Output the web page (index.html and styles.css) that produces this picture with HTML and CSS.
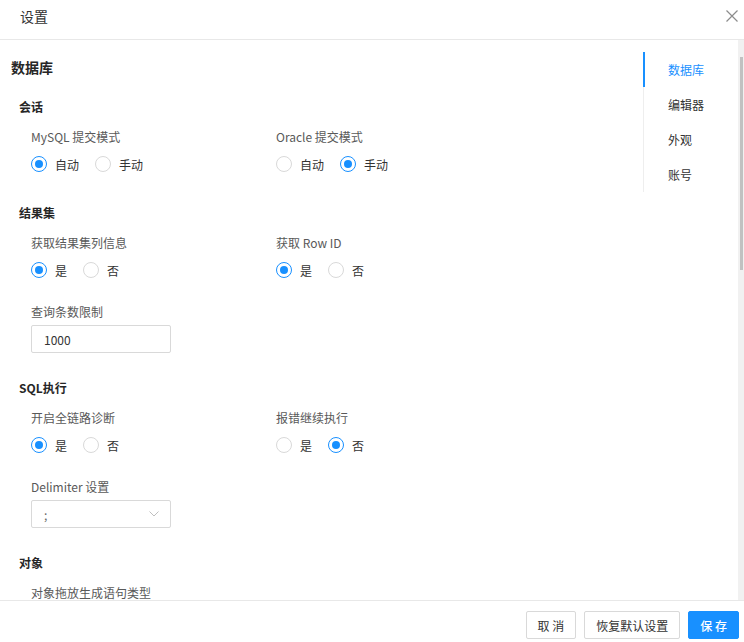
FILE: index.html
```html
<!DOCTYPE html>
<html lang="zh-CN">
<head>
  <meta charset="UTF-8">
  <meta name="viewport" content="width=device-width, initial-scale=1.0">
  <title>设置</title>
  <link rel="stylesheet" href="styles.css">
</head>
<body>
  <div class="modal">
    <!-- 标题栏 -->
    <div class="modal-header">
      <span class="modal-title">设置</span>
      <button type="button" class="modal-close" aria-label="关闭">
        <svg width="12" height="12" viewBox="0 0 12 12"><path d="M0.5 0.5L11.5 11.5M11.5 0.5L0.5 11.5" stroke="#8c8c8c" stroke-width="1.2" fill="none"/></svg>
      </button>
    </div>

    <div class="modal-body">
      <div class="settings">
        <section class="section">
          <h2 class="section-title">数据库</h2>

          <div class="group">
            <h3 class="group-title">会话</h3>
            <div class="fields">
              <div class="field">
                <div class="field-label">MySQL 提交模式</div>
                <div class="radio-group">
                  <label class="radio"><input type="radio" name="mysql-commit" checked><span>自动</span></label>
                  <label class="radio"><input type="radio" name="mysql-commit"><span>手动</span></label>
                </div>
              </div>
              <div class="field">
                <div class="field-label">Oracle 提交模式</div>
                <div class="radio-group">
                  <label class="radio"><input type="radio" name="oracle-commit"><span>自动</span></label>
                  <label class="radio"><input type="radio" name="oracle-commit" checked><span>手动</span></label>
                </div>
              </div>
            </div>
          </div>

          <div class="group">
            <h3 class="group-title">结果集</h3>
            <div class="fields">
              <div class="field">
                <div class="field-label">获取结果集列信息</div>
                <div class="radio-group">
                  <label class="radio"><input type="radio" name="col-info" checked><span>是</span></label>
                  <label class="radio"><input type="radio" name="col-info"><span>否</span></label>
                </div>
              </div>
              <div class="field">
                <div class="field-label">获取 Row ID</div>
                <div class="radio-group">
                  <label class="radio"><input type="radio" name="row-id" checked><span>是</span></label>
                  <label class="radio"><input type="radio" name="row-id"><span>否</span></label>
                </div>
              </div>
              <div class="field">
                <div class="field-label">查询条数限制</div>
                <input class="text-input" type="text" value="1000">
              </div>
            </div>
          </div>

          <div class="group">
            <h3 class="group-title">SQL执行</h3>
            <div class="fields">
              <div class="field">
                <div class="field-label">开启全链路诊断</div>
                <div class="radio-group">
                  <label class="radio"><input type="radio" name="trace" checked><span>是</span></label>
                  <label class="radio"><input type="radio" name="trace"><span>否</span></label>
                </div>
              </div>
              <div class="field">
                <div class="field-label">报错继续执行</div>
                <div class="radio-group">
                  <label class="radio"><input type="radio" name="continue"><span>是</span></label>
                  <label class="radio"><input type="radio" name="continue" checked><span>否</span></label>
                </div>
              </div>
              <div class="field">
                <div class="field-label">Delimiter 设置</div>
                <div class="select">
                  <span class="select-value">;</span>
                  <svg class="select-arrow" width="10" height="6" viewBox="0 0 10 6"><path d="M0.5 0.5L5 5L9.5 0.5" stroke="#bfbfbf" stroke-width="1" fill="none"/></svg>
                </div>
              </div>
            </div>
          </div>

          <div class="group">
            <h3 class="group-title">对象</h3>
            <div class="fields">
              <div class="field">
                <div class="field-label">对象拖放生成语句类型</div>
              </div>
            </div>
          </div>
        </section>
      </div>

      <!-- 右侧锚点导航 -->
      <nav class="anchor">
        <a class="anchor-link active" href="#">数据库</a>
        <a class="anchor-link" href="#">编辑器</a>
        <a class="anchor-link" href="#">外观</a>
        <a class="anchor-link" href="#">账号</a>
      </nav>

      <!-- 滚动条 -->
      <div class="scrollbar">
        <div class="scrollbar-thumb"></div>
      </div>
    </div>

    <div class="modal-footer">
      <button type="button" class="btn">取 消</button>
      <button type="button" class="btn">恢复默认设置</button>
      <button type="button" class="btn btn-primary">保 存</button>
    </div>
  </div>
</body>
</html>
```

FILE: styles.css
```css
html, body {
  margin: 0;
  overflow: hidden;
}

body {
  font-family: "Noto Sans CJK SC", "Noto Sans", sans-serif;
  font-size: 12px;
  color: #333;
  background: #fff;
}

/* 弹窗 */
.modal {
  width: 744px;
}

.modal-header {
  display: flex;
  align-items: center;
  justify-content: space-between;
  height: 32px;
  padding: 0 6px 7px 20px;
  border-bottom: 1px solid #e8e8e8;
}

.modal-title {
  font-size: 14px;
  line-height: 20px;
  color: #333;
}

.modal-close {
  display: flex;
  padding: 0;
  border: 0;
  background: none;
  cursor: pointer;
}

/* 内容区 */
.modal-body {
  display: flex;
  height: 560px;
}

.settings {
  flex: 1;
  overflow: hidden;
  padding: 16px 0 0 11px;
}

.section-title {
  margin: 0 0 19px;
  font-size: 14px;
  line-height: 22px;
  font-weight: 600;
  color: #262626;
}

.group {
  padding-left: 8px;
  margin-bottom: 25px;
}

.group-title {
  margin: 0 0 10px;
  font-size: 12px;
  line-height: 20px;
  font-weight: 600;
  color: #262626;
}

.fields {
  display: grid;
  grid-template-columns: 245px 245px;
  row-gap: 18px;
  padding-left: 12px;
}

.field-label {
  line-height: 20px;
  margin-bottom: 3px;
  color: #595959;
}

/* 单选框 */
.radio-group {
  display: flex;
  align-items: center;
  gap: 16px;
  height: 28px;
}

.radio {
  display: flex;
  align-items: center;
  gap: 8px;
  cursor: pointer;
}

.radio input {
  appearance: none;
  margin: 0;
  width: 16px;
  height: 16px;
  border: 1px solid #d9d9d9;
  border-radius: 50%;
  background: #fff;
  display: flex;
  align-items: center;
  justify-content: center;
}

.radio input:checked {
  border-color: #1890ff;
}

.radio input:checked::after {
  content: "";
  width: 8px;
  height: 8px;
  border-radius: 50%;
  background: #1890ff;
}

/* 输入框与下拉框 */
.text-input,
.select {
  box-sizing: border-box;
  width: 140px;
  height: 28px;
  padding: 0 11px 0 12px;
  border: 1px solid #d9d9d9;
  border-radius: 2px;
  font-family: inherit;
  font-size: 12px;
  color: #333;
}

.select {
  display: flex;
  align-items: center;
  justify-content: space-between;
}

.select-value {
  color: #666;
}

/* 右侧导航 */
.anchor {
  align-self: flex-start;
  width: 94px;
  margin-top: 12px;
  border-left: 1px solid #eee;
}

.anchor-link {
  display: block;
  height: 35px;
  line-height: 35px;
  padding-left: 23px;
  margin-left: -1px;
  border-left: 2px solid transparent;
  color: #333;
  text-decoration: none;
}

.anchor-link.active {
  border-left-color: #1890ff;
  color: #1890ff;
}

/* 滚动条 */
.scrollbar {
  width: 6px;
  padding: 17px 0;
  background: #f1f1f1;
}

.scrollbar-thumb {
  width: 3px;
  height: 213px;
  margin-left: 2px;
  background: #c1c1c1;
}

/* 底部按钮 */
.modal-footer {
  display: flex;
  justify-content: flex-end;
  gap: 8px;
  padding: 10px 5px 3px;
  border-top: 1px solid #e8e8e8;
}

.btn {
  height: 28px;
  padding: 0 11px;
  border: 1px solid #d9d9d9;
  border-radius: 2px;
  background: #fff;
  font-family: inherit;
  font-size: 12px;
  color: #333;
  cursor: pointer;
}

.btn-primary {
  background: #1890ff;
  border-color: #1890ff;
  color: #fff;
  font-weight: 500;
}
```
